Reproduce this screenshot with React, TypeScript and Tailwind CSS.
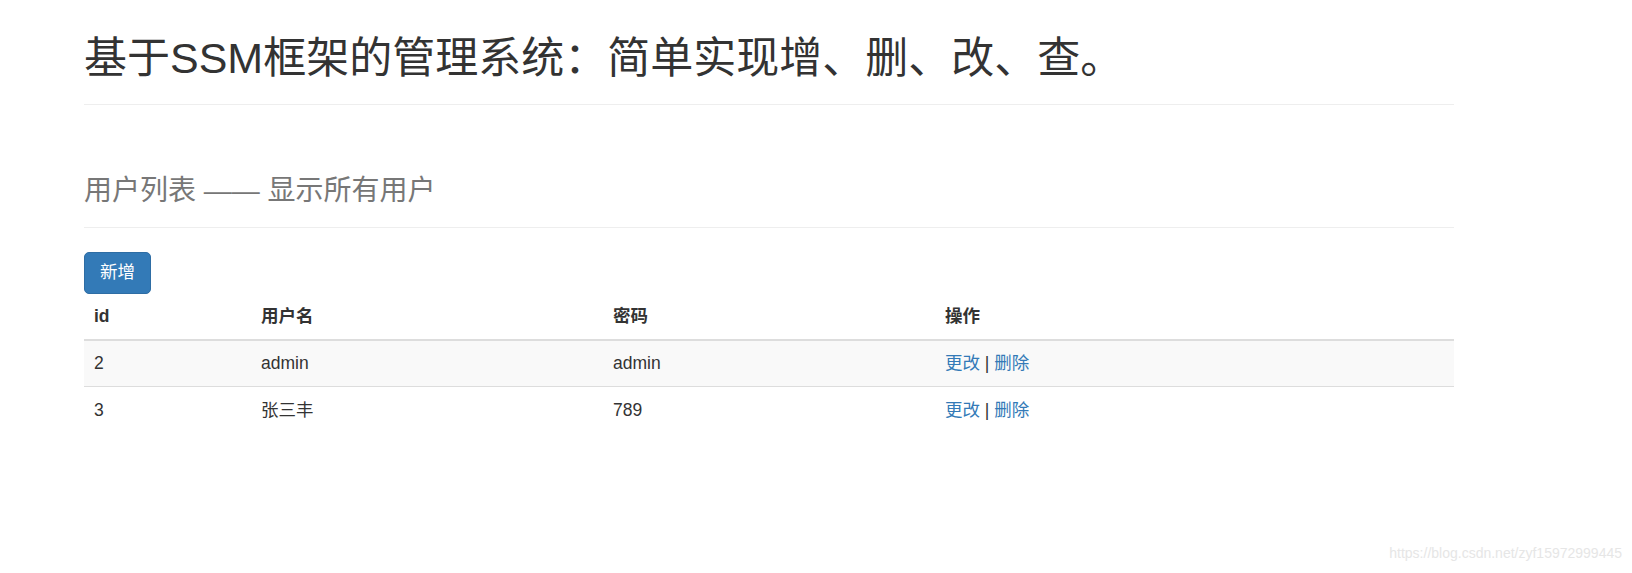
import React from "react";

const font = { fontFamily: '"Liberation Sans", "Noto Sans CJK SC", sans-serif' };

const rows = [
  { id: "2", name: "admin", pwd: "admin" },
  { id: "3", name: "张三丰", pwd: "789" },
];

export default function App() {
  return (
    <div
      className="relative w-[1632px] h-[573px] bg-white text-[#333] text-[17.5px] overflow-hidden font-['Liberation_Sans','Noto_Sans_CJK_SC',sans-serif]"
    >
      <div className="ml-[84px] w-[1370px]">
        <div className="pt-[34px] pb-[20px] border-b border-[#eee]">
          <h1 className="text-[43px] leading-[49.5px] font-normal text-[#333]">
            基于SSM框架的管理系统：简单实现增、删、改、查。
          </h1>
        </div>

        <div className="mt-[66px] pb-[16px] border-b border-[#eee]">
          <h2 className="text-[28px] leading-[40px] font-normal text-[#777]">
            用户列表 —— 显示所有用户
          </h2>
        </div>

        <div className="mt-[24px]">
          <button className="h-[42px] px-[15px] rounded-[5px] bg-[#337ab7] border border-[#2e6da4] text-white text-[17.5px] leading-[25px]">
            新增
          </button>
        </div>

        <table className="w-full border-collapse text-left">
          <colgroup>
            <col className="w-[167px]" />
            <col className="w-[352px]" />
            <col className="w-[332px]" />
            <col />
          </colgroup>
          <thead>
            <tr className="border-b-2 border-[#ddd]">
              <th className="px-[10px] h-[46px] font-bold leading-[25px] align-middle">id</th>
              <th className="px-[10px] h-[46px] font-bold leading-[25px] align-middle">用户名</th>
              <th className="px-[10px] h-[46px] font-bold leading-[25px] align-middle">密码</th>
              <th className="px-[10px] h-[46px] font-bold leading-[25px] align-middle">操作</th>
            </tr>
          </thead>
          <tbody>
            {rows.map((r, i) => (
              <tr
                key={r.id}
                className={i === 0 ? "bg-[#f9f9f9]" : "border-t border-[#ddd] bg-white"}
              >
                <td className="px-[10px] h-[47px] leading-[25px] align-middle">{r.id}</td>
                <td className="px-[10px] h-[47px] leading-[25px] align-middle">{r.name}</td>
                <td className="px-[10px] h-[47px] leading-[25px] align-middle">{r.pwd}</td>
                <td className="px-[10px] h-[47px] leading-[25px] align-middle">
                  <a className="text-[#337ab7]" href="#">更改</a>
                  <span> | </span>
                  <a className="text-[#337ab7]" href="#">删除</a>
                </td>
              </tr>
            ))}
          </tbody>
        </table>
      </div>

      <div
        className="absolute right-[10px] top-[543px] text-[14px] leading-[20px] text-[#e6e6e6]"
        style={font}
      >
        https://blog.csdn.net/zyf15972999445
      </div>
    </div>
  );
}
